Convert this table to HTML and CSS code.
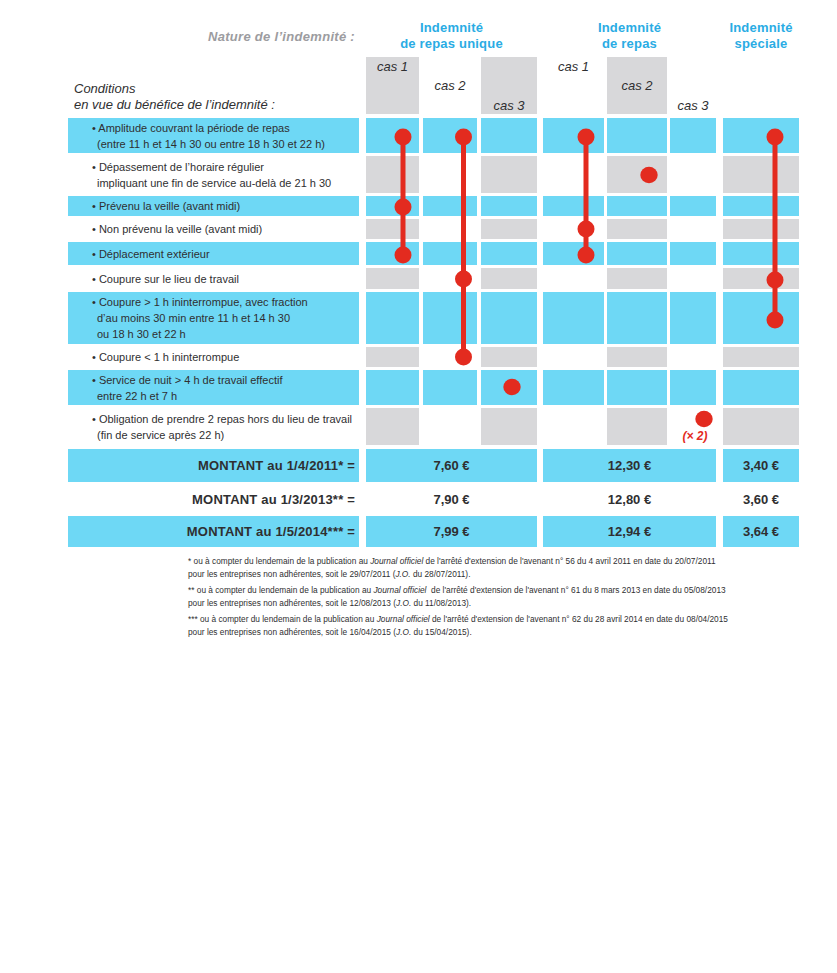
FILE: index.html
```html
<!DOCTYPE html>
<html lang="fr">
<head>
<meta charset="utf-8">
<title>Indemnités de repas</title>
<link rel="stylesheet" href="styles.css">
</head>
<body>
<div class="page">
  <div class="head">
    <div class="lab nature">Nature de l’indemnité :</div>
    <div class="ga title">Indemnité<br>de repas unique</div>
    <div class="gb title">Indemnité<br>de repas</div>
    <div class="gc title">Indemnité<br>spéciale</div>
  </div>

  <div class="row casrow">
    <div class="lab cond">Conditions<br>en vue du bénéfice de l’indemnité :</div>
    <div class="ga grp">
      <div class="cell c1 grey top">cas 1</div>
      <div class="cell c2 mid">cas 2</div>
      <div class="cell c3 grey bot">cas 3</div>
    </div>
    <div class="gb grp">
      <div class="cell c4 top">cas 1</div>
      <div class="cell c5 grey mid">cas 2</div>
      <div class="cell c6 bot">cas 3</div>
    </div>
    <div class="gc grp">
      <div class="cell c7"></div>
    </div>
  </div>

  <div class="rows">
    <div class="row blue h35">
      <div class="lab txt"><p>• Amplitude couvrant la période de repas<br>(entre 11 h et 14 h 30 ou entre 18 h 30 et 22 h)</p></div>
      <div class="ga grp"><div class="cell c1"></div><div class="cell c2"></div><div class="cell c3"></div></div>
      <div class="gb grp"><div class="cell c4"></div><div class="cell c5"></div><div class="cell c6"></div></div>
      <div class="gc grp"><div class="cell c7"></div></div>
    </div>
    <div class="row white h37">
      <div class="lab txt"><p>• Dépassement de l’horaire régulier<br>impliquant une fin de service au-delà de 21 h 30</p></div>
      <div class="ga grp"><div class="cell c1"></div><div class="cell c2"></div><div class="cell c3"></div></div>
      <div class="gb grp"><div class="cell c4"></div><div class="cell c5"></div><div class="cell c6"></div></div>
      <div class="gc grp"><div class="cell c7"></div></div>
    </div>
    <div class="row blue h20">
      <div class="lab txt"><p>• Prévenu la veille (avant midi)</p></div>
      <div class="ga grp"><div class="cell c1"></div><div class="cell c2"></div><div class="cell c3"></div></div>
      <div class="gb grp"><div class="cell c4"></div><div class="cell c5"></div><div class="cell c6"></div></div>
      <div class="gc grp"><div class="cell c7"></div></div>
    </div>
    <div class="row white h20">
      <div class="lab txt"><p>• Non prévenu la veille (avant midi)</p></div>
      <div class="ga grp"><div class="cell c1"></div><div class="cell c2"></div><div class="cell c3"></div></div>
      <div class="gb grp"><div class="cell c4"></div><div class="cell c5"></div><div class="cell c6"></div></div>
      <div class="gc grp"><div class="cell c7"></div></div>
    </div>
    <div class="row blue h23">
      <div class="lab txt"><p>• Déplacement extérieur</p></div>
      <div class="ga grp"><div class="cell c1"></div><div class="cell c2"></div><div class="cell c3"></div></div>
      <div class="gb grp"><div class="cell c4"></div><div class="cell c5"></div><div class="cell c6"></div></div>
      <div class="gc grp"><div class="cell c7"></div></div>
    </div>
    <div class="row white h21">
      <div class="lab txt"><p>• Coupure sur le lieu de travail</p></div>
      <div class="ga grp"><div class="cell c1"></div><div class="cell c2"></div><div class="cell c3"></div></div>
      <div class="gb grp"><div class="cell c4"></div><div class="cell c5"></div><div class="cell c6"></div></div>
      <div class="gc grp"><div class="cell c7"></div></div>
    </div>
    <div class="row blue h52">
      <div class="lab txt"><p>• Coupure &gt; 1 h ininterrompue, avec fraction<br>d’au moins 30 min entre 11 h et 14 h 30<br>ou 18 h 30 et 22 h</p></div>
      <div class="ga grp"><div class="cell c1"></div><div class="cell c2"></div><div class="cell c3"></div></div>
      <div class="gb grp"><div class="cell c4"></div><div class="cell c5"></div><div class="cell c6"></div></div>
      <div class="gc grp"><div class="cell c7"></div></div>
    </div>
    <div class="row white h20">
      <div class="lab txt"><p>• Coupure &lt; 1 h ininterrompue</p></div>
      <div class="ga grp"><div class="cell c1"></div><div class="cell c2"></div><div class="cell c3"></div></div>
      <div class="gb grp"><div class="cell c4"></div><div class="cell c5"></div><div class="cell c6"></div></div>
      <div class="gc grp"><div class="cell c7"></div></div>
    </div>
    <div class="row blue h35">
      <div class="lab txt"><p>• Service de nuit &gt; 4 h de travail effectif<br>entre 22 h et 7 h</p></div>
      <div class="ga grp"><div class="cell c1"></div><div class="cell c2"></div><div class="cell c3"></div></div>
      <div class="gb grp"><div class="cell c4"></div><div class="cell c5"></div><div class="cell c6"></div></div>
      <div class="gc grp"><div class="cell c7"></div></div>
    </div>
    <div class="row white h37">
      <div class="lab txt"><p>• Obligation de prendre 2 repas hors du lieu de travail<br>(fin de service après 22 h)</p></div>
      <div class="ga grp"><div class="cell c1"></div><div class="cell c2"></div><div class="cell c3"></div></div>
      <div class="gb grp"><div class="cell c4"></div><div class="cell c5"></div><div class="cell c6"></div></div>
      <div class="gc grp"><div class="cell c7"></div></div>
    </div>
  </div>

  <div class="montants">
    <div class="row mrow blue h33">
      <div class="lab mlab">MONTANT au 1/4/2011* =</div>
      <div class="ga mval">7,60 €</div>
      <div class="gb mval">12,30 €</div>
      <div class="gc mval">3,40 €</div>
    </div>
    <div class="row mrow plain h34">
      <div class="lab mlab">MONTANT au 1/3/2013** =</div>
      <div class="ga mval">7,90 €</div>
      <div class="gb mval">12,80 €</div>
      <div class="gc mval">3,60 €</div>
    </div>
    <div class="row mrow blue h31">
      <div class="lab mlab">MONTANT au 1/5/2014*** =</div>
      <div class="ga mval">7,99 €</div>
      <div class="gb mval">12,94 €</div>
      <div class="gc mval">3,64 €</div>
    </div>
  </div>

  <div class="notes">
    <p>* ou à compter du lendemain de la publication au <i>Journal officiel</i> de l'arrêté d'extension de l'avenant n° 56 du 4 avril 2011 en date du 20/07/2011<br>pour les entreprises non adhérentes, soit le 29/07/2011 (<i>J.O.</i> du 28/07/2011).</p>
    <p>** ou à compter du lendemain de la publication au <i>Journal officiel</i>&nbsp; de l'arrêté d'extension de l'avenant n° 61 du 8 mars 2013 en date du 05/08/2013<br>pour les entreprises non adhérentes, soit le 12/08/2013 (<i>J.O.</i> du 11/08/2013).</p>
    <p>*** ou à compter du lendemain de la publication au <i>Journal officiel</i> de l'arrêté d'extension de l'avenant n° 62 du 28 avril 2014 en date du 08/04/2015<br>pour les entreprises non adhérentes, soit le 16/04/2015 (<i>J.O.</i> du 15/04/2015).</p>
  </div>

  <svg class="marks" width="837" height="560" viewBox="0 0 837 560">
    <g fill="#e32b1f" stroke="#e32b1f">
      <line x1="403" y1="137" x2="403" y2="255" stroke-width="5"/>
      <circle cx="403" cy="137" r="8.5" stroke="none"/>
      <circle cx="403" cy="207" r="8.5" stroke="none"/>
      <circle cx="403" cy="255" r="8.5" stroke="none"/>

      <line x1="463.5" y1="137" x2="463.5" y2="357" stroke-width="5"/>
      <circle cx="463.5" cy="137" r="8.5" stroke="none"/>
      <circle cx="463.5" cy="279" r="8.5" stroke="none"/>
      <circle cx="463.5" cy="357" r="8.5" stroke="none"/>

      <ellipse cx="512" cy="387" rx="8.7" ry="8.2" stroke="none"/>

      <line x1="586" y1="137" x2="586" y2="255" stroke-width="5"/>
      <circle cx="586" cy="137" r="8.5" stroke="none"/>
      <circle cx="586" cy="229" r="8.5" stroke="none"/>
      <circle cx="586" cy="255" r="8.5" stroke="none"/>

      <ellipse cx="649" cy="175" rx="8.7" ry="8.2" stroke="none"/>

      <ellipse cx="704" cy="419" rx="8.7" ry="8.2" stroke="none"/>

      <line x1="775" y1="137" x2="775" y2="320" stroke-width="5"/>
      <circle cx="775" cy="137" r="8.5" stroke="none"/>
      <circle cx="775" cy="280" r="8.5" stroke="none"/>
      <circle cx="775" cy="320" r="8.5" stroke="none"/>
    </g>
    <text x="695" y="440" class="times">(× 2)</text>
  </svg>
</div>
</body>
</html>
```

FILE: styles.css
```css
* { box-sizing: border-box; }

body {
  margin: 0;
  background: #ffffff;
  font-family: "Liberation Sans", Arial, sans-serif;
  color: #2f2f31;
}

.page {
  position: relative;
  width: 837px;
  height: 973px;
  padding: 20px 0 0 68px;
}

/* column groups */
.row { display: flex; }
.head { display: flex; height: 32px; align-items: center; }
.lab { width: 291px; flex: none; }
.ga { width: 171px; margin-left: 7px; flex: none; }
.gb { width: 173px; margin-left: 6px; flex: none; }
.gc { width: 76px; margin-left: 7px; flex: none; }

.grp { display: flex; }
.ga.grp { gap: 4px; }
.gb.grp { gap: 3px; }

.cell { flex: none; height: 100%; }
.c1 { width: 53px; }
.c2 { width: 54px; }
.c3 { width: 56px; }
.c4 { width: 61px; }
.c5 { width: 60px; }
.c6 { width: 46px; }
.c7 { width: 76px; }

/* header */
.nature {
  text-align: right;
  padding-right: 4px;
  font-size: 13px;
  font-weight: bold;
  font-style: italic;
  letter-spacing: 0.3px;
  color: #9c9ca0;
}
.title {
  text-align: center;
  font-size: 13px;
  line-height: 16px;
  font-weight: bold;
  letter-spacing: 0.2px;
  color: #2aace4;
}

/* cas row */
.casrow { height: 57px; margin-top: 5px; }
.cond {
  align-self: flex-end;
  padding: 0 0 1px 6px;
  font-size: 13px;
  line-height: 16px;
  font-style: italic;
  color: #2f2f31;
}
.casrow .cell {
  display: flex;
  justify-content: center;
  font-size: 13px;
  line-height: 16px;
  font-style: italic;
  color: #2f2f31;
}
.casrow .top { align-items: flex-start; padding-top: 2px; }
.casrow .mid { align-items: center; }
.casrow .bot { align-items: flex-end; }
.grey { background: #d8d8da; }

/* condition rows */
.rows { display: flex; flex-direction: column; gap: 3px; margin-top: 4px; }
.h20 { height: 20px; }
.h21 { height: 21px; }
.h23 { height: 23px; }
.h31 { height: 31px; }
.h33 { height: 33px; }
.h34 { height: 34px; }
.h35 { height: 35px; }
.h37 { height: 37px; }
.h52 { height: 52px; }

.txt {
  display: flex;
  align-items: center;
  padding-left: 29px;
  font-size: 11px;
  line-height: 16px;
  color: #2f2f31;
}
.txt p { margin: 0; text-indent: -5px; }

.blue .lab, .blue .cell, .blue .mval { background: #6ed8f5; }
.white .c1, .white .c3, .white .c5, .white .c7 { background: #d8d8da; }

/* montants */
.montants { margin-top: 4px; }
.mrow { align-items: stretch; }
.mlab {
  display: flex;
  align-items: center;
  justify-content: flex-end;
  padding-right: 4px;
  font-size: 13px;
  font-weight: bold;
  letter-spacing: 0.2px;
  color: #2f2f31;
}
.mval {
  display: flex;
  align-items: center;
  justify-content: center;
  font-size: 13px;
  font-weight: bold;
  color: #2f2f31;
}

/* notes */
.notes {
  margin-top: 8px;
  padding-left: 120px;
  font-size: 8.3px;
  line-height: 13px;
  color: #2f2f31;
}
.notes p { margin: 0 0 3px; }

/* red markers overlay */
.marks {
  position: absolute;
  top: 0;
  left: 0;
  pointer-events: none;
}
.times {
  font-family: "Liberation Sans", Arial, sans-serif;
  font-size: 12px;
  font-weight: bold;
  font-style: italic;
  fill: #e32b1f;
  text-anchor: middle;
}
```
